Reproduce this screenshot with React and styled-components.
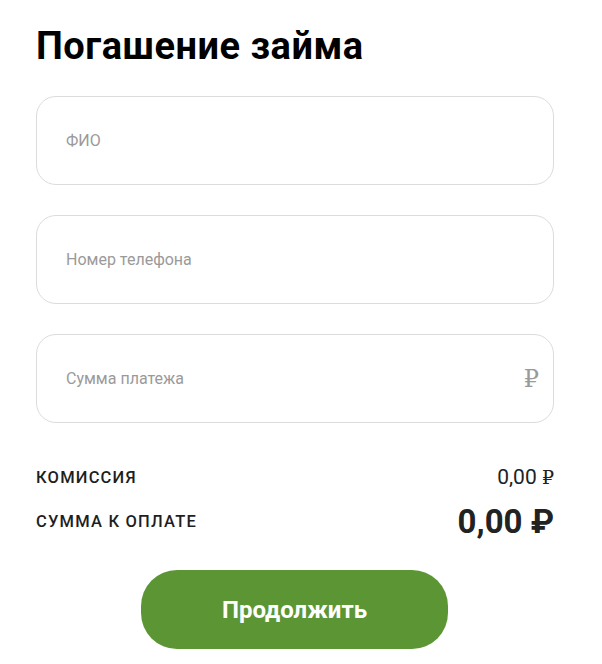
import React from 'react'
import styled, { createGlobalStyle } from 'styled-components'

const GlobalStyle = createGlobalStyle`
  html, body {
    margin: 0;
    padding: 0;
    background: #fff;
  }
  body {
    font-family: Roboto, "Noto Sans", Arial, sans-serif;
  }
`

const Page = styled.main`
  width: 602px;
  padding: 22px 48px 0 36px;
  box-sizing: border-box;
`

const Title = styled.h1`
  margin: 0 0 26px;
  font-size: 38px;
  font-weight: 700;
  line-height: 48px;
  color: #000;
  letter-spacing: 0.5px;
`

const Fields = styled.div`
  display: flex;
  flex-direction: column;
  gap: 30px;
  margin-bottom: 38px;
`

const Field = styled.label`
  display: flex;
  align-items: center;
  height: 89px;
  box-sizing: border-box;
  padding: 0 14px 0 29px;
  border: 1px solid #dcdcdc;
  border-radius: 20px;
  background: #fff;
`

const Input = styled.input`
  flex: 1;
  border: none;
  outline: none;
  background: transparent;
  font-family: Roboto, Arial, sans-serif;
  font-size: 16px;
  color: #333;
  padding: 0;
  &::placeholder {
    color: #9a9a9a;
  }
`

const Currency = styled.span`
  font-family: "DejaVu Serif", "Liberation Serif", serif;
  font-size: 24px;
  color: #9a9a9a;
`

const Summary = styled.div`
  display: flex;
  flex-direction: column;
  gap: 6px;
  margin-bottom: 27px;
`

const Row = styled.div`
  display: flex;
  justify-content: space-between;
  align-items: center;
  height: ${p => (p.$big ? '44px' : '32px')};
`

const Label = styled.span`
  font-size: 16.5px;
  font-weight: 500;
  letter-spacing: 1.2px;
  color: #1e1e1e;
  text-transform: uppercase;
`

const Amount = styled.span`
  font-size: ${p => (p.$big ? '33px' : '21px')};
  font-weight: ${p => (p.$big ? 700 : 400)};
  color: #222;
`

const Rub = styled.span`
  font-family: ${p => (p.$serif ? '"DejaVu Serif", "Liberation Serif", serif' : 'inherit')};
  font-size: ${p => (p.$serif ? '19px' : 'inherit')};
`

const Actions = styled.div`
  display: flex;
  padding-left: 105px;
`

const Button = styled.button`
  width: 307px;
  height: 79px;
  border: none;
  border-radius: 36px;
  background: #5c9634;
  color: #fff;
  font-family: Roboto, Arial, sans-serif;
  font-size: 24px;
  font-weight: 700;
  cursor: pointer;
`

export default function App() {
  return (
    <>
      <GlobalStyle />
      <Page>
        <Title>Погашение займа</Title>
        <Fields>
          <Field>
            <Input placeholder="ФИО" />
          </Field>
          <Field>
            <Input placeholder="Номер телефона" />
          </Field>
          <Field>
            <Input placeholder="Сумма платежа" />
            <Currency>₽</Currency>
          </Field>
        </Fields>
        <Summary>
          <Row>
            <Label>Комиссия</Label>
            <Amount>0,00 <Rub $serif>₽</Rub></Amount>
          </Row>
          <Row $big>
            <Label>Сумма к оплате</Label>
            <Amount $big>0,00 <Rub>₽</Rub></Amount>
          </Row>
        </Summary>
        <Actions>
          <Button type="button">Продолжить</Button>
        </Actions>
      </Page>
    </>
  )
}
